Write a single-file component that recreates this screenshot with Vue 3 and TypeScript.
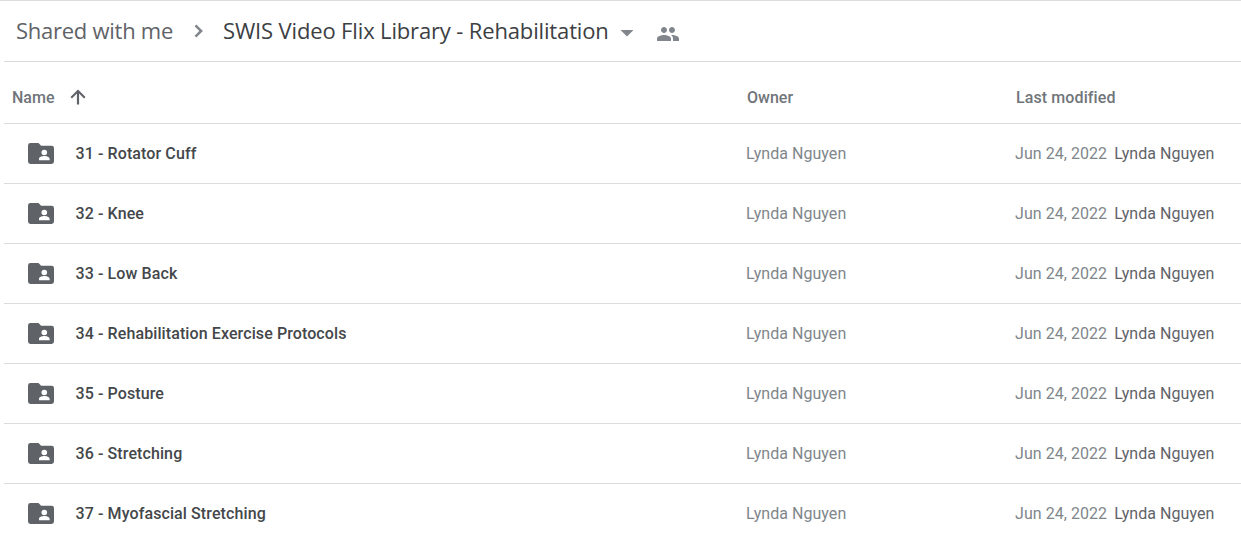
<script setup lang="ts">
interface FolderRow {
  name: string;
}

const rows: FolderRow[] = [
  { name: "31 - Rotator Cuff" },
  { name: "32 - Knee" },
  { name: "33 - Low Back" },
  { name: "34 - Rehabilitation Exercise Protocols" },
  { name: "35 - Posture" },
  { name: "36 - Stretching" },
  { name: "37 - Myofascial Stretching" },
];
</script>

<template>
  <div class="drive-page">
    <header class="crumbs">
      <span class="crumb-parent">Shared with me</span>
      <svg class="crumb-chevron" viewBox="0 0 24 24" width="24" height="24">
        <path d="M9.4 5.500 7.600 7.300 12.300 12l-4.700 4.700 1.800 1.800 6.500-6.500z" />
      </svg>
      <span class="crumb-current">SWIS Video Flix Library - Rehabilitation</span>
      <svg class="crumb-caret" viewBox="0 0 24 24" width="24" height="24">
        <path d="M5.500 9h13L12 15.500z" />
      </svg>
      <svg class="crumb-people" viewBox="0 0 24 24" width="24" height="24">
        <path d="M16 11c1.660 0 2.990-1.340 2.990-3S17.660 5 16 5s-3 1.340-3 3 1.340 3 3 3zm-8 0c1.660 0 2.990-1.340 2.990-3S9.660 5 8 5 5 6.340 5 8s1.340 3 3 3zm0 2c-2.330 0-7 1.170-7 3.500V19h14v-2.500C15 14.170 10.330 13 8 13zm8 0c-.29 0-.62.02-.97.05 1.160.84 1.970 1.970 1.970 3.450V19h6v-2.500c0-2.330-4.670-3.500-7-3.500z" />
      </svg>
    </header>

    <div class="table-head">
      <div class="col-name head-name">
        <span>Name</span>
        <svg class="sort-arrow" viewBox="0 0 24 24" width="22" height="22">
          <path d="M3.800 12l1.600 1.600 5.400-5.300V20.200h2.400V8.300l5.400 5.300 1.600-1.600-8.200-8.200z" />
        </svg>
      </div>
      <div class="col-owner head-owner">Owner</div>
      <div class="col-modified head-modified">Last modified</div>
    </div>

    <div v-for="row in rows" :key="row.name" class="table-row">
      <div class="col-name cell-name">
        <svg class="folder-icon" viewBox="0 0 26 22" width="26" height="21" preserveAspectRatio="none">
          <path
            fill-rule="evenodd"
            d="M2.500 0h8l2.600 2.800h10.400A2.500 2.500 0 0 1 26 5.300v14.200a2.500 2.500 0 0 1-2.500 2.500h-21A2.500 2.500 0 0 1 0 19.500V2.500A2.500 2.500 0 0 1 2.500 0zM16.300 7.200a2.800 2.800 0 1 0 0 5.600 2.800 2.800 0 0 0 0-5.600zM11 16.200v1.800h10.600v-1.800c0-1.700-3.500-2.600-5.300-2.600s-5.300.9-5.300 2.600z"
          />
        </svg>
        <span>{{ row.name }}</span>
      </div>
      <div class="col-owner cell-owner">Lynda Nguyen</div>
      <div class="col-modified cell-modified">
        <span class="mod-date">Jun 24, 2022</span>
        <span class="mod-by">Lynda Nguyen</span>
      </div>
    </div>
  </div>
</template>

<style>
html,
body {
  margin: 0;
  background: #fff;
}
</style>

<style scoped>
.drive-page {
  width: 1241px;
  height: 541px;
  overflow: hidden;
  box-sizing: border-box;
  border-top: 1px solid #dadce0;
  font-family: Roboto, "Liberation Sans", sans-serif;
  background: #fff;
}

.crumbs {
  display: flex;
  align-items: center;
  height: 60px;
  margin-left: 4px;
  padding-left: 12px;
  border-bottom: 1px solid #dadce0;
  font-family: "Open Sans", Roboto, sans-serif;
  font-size: 22px;
  white-space: nowrap;
}

.crumb-parent {
  color: #5f6368;
  letter-spacing: -0.26px;
  margin-top: -2px;
}

.crumb-chevron {
  fill: #80868b;
  margin-left: 13.5px;
  margin-right: 12.5px;
}

.crumb-current {
  color: #3c4043;
  letter-spacing: -0.15px;
  margin-top: -2px;
}

.crumb-caret {
  fill: #80868b;
  margin-left: 6.5px;
  margin-top: 3px;
}

.crumb-people {
  fill: #80868b;
  margin-left: 17px;
  margin-top: 5px;
}

.table-head,
.table-row {
  display: flex;
  align-items: center;
  margin-left: 4px;
  border-bottom: 1px solid #dadce0;
}

.table-head {
  height: 62px;
  box-sizing: border-box;
  padding-top: 9px;
  font-size: 16px;
  font-weight: 500;
  color: #70757a;
}

.table-row {
  height: 59px;
  font-size: 16px;
}

.col-name {
  width: 741px;
  display: flex;
  align-items: center;
  flex-shrink: 0;
}

.col-owner {
  width: 269px;
  flex-shrink: 0;
}

.col-modified {
  flex: 1;
  white-space: nowrap;
}

.head-name {
  padding-left: 8px;
  box-sizing: border-box;
}

.sort-arrow {
  fill: #5f6368;
  margin-left: 13px;
}

.head-owner {
  padding-left: 2px;
  box-sizing: border-box;
}

.head-modified {
  padding-left: 2px;
  letter-spacing: 0.1px;
}

.cell-name {
  padding-left: 24px;
  box-sizing: border-box;
  font-weight: 500;
  color: #44474a;
  letter-spacing: 0.1px;
}

.folder-icon {
  fill: #5f6368;
  margin-right: 21.5px;
}

.cell-owner {
  color: #80868b;
  letter-spacing: 0.05px;
  padding-left: 1px;
  box-sizing: border-box;
}

.cell-modified {
  padding-left: 1px;
}

.mod-date {
  color: #80868b;
  letter-spacing: 0.05px;
}

.mod-by {
  margin-left: 7px;
  color: #5f6368;
  letter-spacing: 0.05px;
}
</style>
